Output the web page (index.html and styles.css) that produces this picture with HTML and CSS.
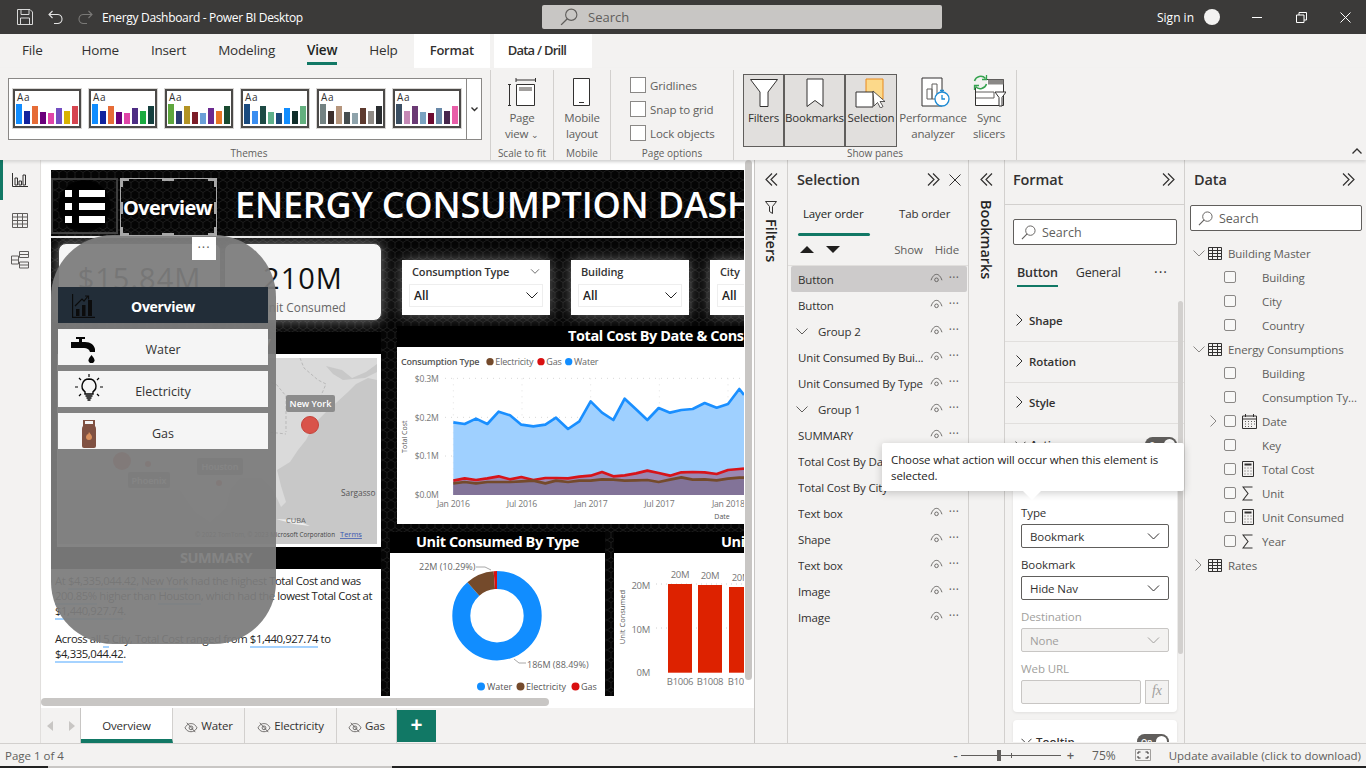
FILE: index.html
```html
<!DOCTYPE html>
<html lang="en">
<head>
<meta charset="utf-8">
<title>Energy Dashboard - Power BI Desktop</title>
<link rel="stylesheet" href="styles.css">
</head>
<body>
<svg class="defs" width="0" height="0" aria-hidden="true">
  <defs>
    <symbol id="eye" viewBox="0 0 14 11"><path d="M1 8C2.500 3.500 4.800 1.500 7 1.500S11.500 3.500 13 8" fill="none" stroke="currentColor"/><circle cx="7" cy="7.500" r="2" fill="none" stroke="currentColor"/></symbol>
    <symbol id="eyeoff" viewBox="0 0 16 14"><path d="M1 8C3 4 5.500 3 8 3s5 1 7 5c-2 3.500-4.500 4.500-7 4.500S3 11.500 1 8z" fill="none" stroke="currentColor"/><circle cx="8" cy="8" r="2.200" fill="none" stroke="currentColor"/><path d="M3 2l10 11" stroke="currentColor"/></symbol>
    <symbol id="dbl-r" viewBox="0 0 13 13"><path d="M1 .5l6 6-6 6M6 .5l6 6-6 6" fill="none" stroke="currentColor" stroke-width="1.200"/></symbol>
    <symbol id="dbl-l" viewBox="0 0 13 13"><path d="M12 .5l-6 6 6 6M7 .5l-6 6 6 6" fill="none" stroke="currentColor" stroke-width="1.200"/></symbol>
    <symbol id="chev-d" viewBox="0 0 12 7"><path d="M.5.5l5.500 5.500L11.500.5" fill="none" stroke="currentColor"/></symbol>
    <symbol id="chev-r" viewBox="0 0 7 12"><path d="M.5.5l5.500 5.500L.5 11.500" fill="none" stroke="currentColor"/></symbol>
    <symbol id="lens" viewBox="0 0 16 16"><circle cx="10" cy="6" r="5" fill="none" stroke="currentColor"/><path d="M6.500 9.500L1 15" stroke="currentColor" stroke-width="1.200"/></symbol>
    <symbol id="tbl" viewBox="0 0 14 13"><path d="M.5.500h13v12H.5zM.5 3.500h13M.5 6.500h13M.5 9.500h13M4.500.500v12M9.500.500v12" fill="none" stroke="#323130"/></symbol>
    <symbol id="calc" viewBox="0 0 12 16"><path d="M.5.500h11v15H.5z" fill="none" stroke="#323130"/><path d="M2.500 2.500h7v2h-7z" fill="#323130"/><path d="M2.500 7h1M5.500 7h1M8.500 7h1M2.500 10h1M5.500 10h1M8.500 10h1M2.500 13h1M5.500 13h1M8.500 13h1" stroke="#605e5c"/></symbol>
    <symbol id="sigma" viewBox="0 0 11 15"><path d="M10.500 1H1l5 6.500L1 14h9.500" fill="none" stroke="#323130" stroke-width="1.100"/></symbol>
    <symbol id="cal" viewBox="0 0 15 15"><path d="M.5 2h14v12.500H.5zM.5 5h14M3.500 0v3M11.500 0v3" fill="none" stroke="#323130"/><path d="M3 7.500h1M6 7.500h1M9 7.500h1M12 7.500h1M3 10h1M6 10h1M9 10h1M12 10h1M3 12.500h1M6 12.500h1M9 12.500h1" stroke="#605e5c"/></symbol>
  </defs>
</svg>

<div class="app">
  <header class="titlebar">
    <div class="qat">
      <svg class="qat-save" width="16" height="16" viewBox="0 0 16 16"><path d="M.5.500h12.500l2.500 2.500v12.500H.5z" fill="none" stroke="#d8d8d8"/><path d="M4 .500v5h8v-5M3.500 15.500V9h9v6.500" fill="none" stroke="#d8d8d8"/></svg>
      <svg class="qat-undo" width="15" height="15" viewBox="0 0 15 15"><path d="M4.500 1L1 4.500 4.500 8M1 4.500h8a4.500 4.500 0 0 1 1 9H6" fill="none" stroke="#e4e4e4" stroke-width="1.100"/></svg>
      <svg class="qat-redo" width="15" height="15" viewBox="0 0 15 15"><path d="M10.500 1L14 4.500 10.500 8M14 4.500H6a4.500 4.500 0 0 0-1 9h4" fill="none" stroke="#7a7977" stroke-width="1.100"/></svg>
    </div>
    <span class="doc-title">Energy Dashboard - Power BI Desktop</span>
    <div class="search-top"><svg width="18" height="18"><use href="#lens"/></svg><span>Search</span></div>
    <div class="account"><span>Sign in</span><i class="avatar"></i></div>
    <div class="winbtns">
      <svg width="11" height="11" viewBox="0 0 11 11"><path d="M0 5.500h10" stroke="#fff"/></svg>
      <svg width="11" height="11" viewBox="0 0 11 11"><path d="M.5 3h7.500v7.500H.5zM3 3V.5h7.500V8H8" fill="none" stroke="#fff"/></svg>
      <svg width="11" height="11" viewBox="0 0 11 11"><path d="M.5.500l10 10M10.500.500l-10 10" stroke="#fff"/></svg>
    </div>
  </header>

  <nav class="menutabs">
    <span class="mt mt-file">File</span>
    <span class="mt">Home</span>
    <span class="mt">Insert</span>
    <span class="mt">Modeling</span>
    <span class="mt mt-on">View</span>
    <span class="mt">Help</span>
    <span class="mt-ctx mt-format">Format</span>
    <span class="mt-ctx mt-drill">Data / Drill</span>
  </nav>

  <section class="ribbon">
    <div class="group g-themes">
      <div class="gallery">
        <div class="gallery-items">
          <div class="theme"><span class="aa">Aa</span><svg width="62" height="20" viewBox="0 0 62 20"><rect x="0" y="0" width="6" height="20" fill="#118dff"/><rect x="8" y="7" width="6" height="13" fill="#12239e"/><rect x="16" y="2" width="6" height="18" fill="#e66c37"/><rect x="24" y="8" width="6" height="12" fill="#6b007b"/><rect x="32" y="9" width="6" height="11" fill="#e044a7"/><rect x="40" y="4" width="6" height="16" fill="#744ec2"/><rect x="48" y="7" width="6" height="13" fill="#d9b300"/><rect x="56" y="2" width="6" height="18" fill="#d64550"/></svg></div>
          <div class="theme"><span class="aa">Aa</span><svg width="62" height="20" viewBox="0 0 62 20"><rect x="0" y="0" width="6" height="20" fill="#118dff"/><rect x="8" y="7" width="6" height="13" fill="#12239e"/><rect x="16" y="2" width="6" height="18" fill="#e66c37"/><rect x="24" y="8" width="6" height="12" fill="#6b007b"/><rect x="32" y="9" width="6" height="11" fill="#e044a7"/><rect x="40" y="4" width="6" height="16" fill="#4e2d84"/><rect x="48" y="7" width="6" height="13" fill="#1aab40"/><rect x="56" y="2" width="6" height="18" fill="#15403f"/></svg></div>
          <div class="theme"><span class="aa">Aa</span><svg width="62" height="20" viewBox="0 0 62 20"><rect x="0" y="0" width="6" height="20" fill="#5ea63c"/><rect x="8" y="7" width="6" height="13" fill="#2c3c72"/><rect x="16" y="2" width="6" height="18" fill="#b39324"/><rect x="24" y="8" width="6" height="12" fill="#7c1c28"/><rect x="32" y="9" width="6" height="11" fill="#6a9fd8"/><rect x="40" y="4" width="6" height="16" fill="#6b2a90"/><rect x="48" y="7" width="6" height="13" fill="#e87524"/><rect x="56" y="2" width="6" height="18" fill="#1a4a30"/></svg></div>
          <div class="theme"><span class="aa">Aa</span><svg width="62" height="20" viewBox="0 0 62 20"><rect x="0" y="0" width="6" height="20" fill="#1a4a7e"/><rect x="8" y="7" width="6" height="13" fill="#3b8ef0"/><rect x="16" y="2" width="6" height="18" fill="#1d4a44"/><rect x="24" y="8" width="6" height="12" fill="#5fb08a"/><rect x="32" y="9" width="6" height="11" fill="#1c4a7a"/><rect x="40" y="4" width="6" height="16" fill="#118dff"/><rect x="48" y="7" width="6" height="13" fill="#102e2a"/><rect x="56" y="2" width="6" height="18" fill="#63b07e"/></svg></div>
          <div class="theme"><span class="aa">Aa</span><svg width="62" height="20" viewBox="0 0 62 20"><rect x="0" y="0" width="6" height="20" fill="#738282"/><rect x="8" y="7" width="6" height="13" fill="#3c2f2c"/><rect x="16" y="2" width="6" height="18" fill="#b5957c"/><rect x="24" y="8" width="6" height="12" fill="#454d4f"/><rect x="32" y="9" width="6" height="11" fill="#8ea3ab"/><rect x="40" y="4" width="6" height="16" fill="#5d3a2e"/><rect x="48" y="7" width="6" height="13" fill="#8f8a85"/><rect x="56" y="2" width="6" height="18" fill="#2a2d30"/></svg></div>
          <div class="theme"><span class="aa">Aa</span><svg width="62" height="20" viewBox="0 0 62 20"><rect x="0" y="0" width="6" height="20" fill="#3a4f63"/><rect x="8" y="7" width="6" height="13" fill="#c488b5"/><rect x="16" y="2" width="6" height="18" fill="#6b3a74"/><rect x="24" y="8" width="6" height="12" fill="#7aa2c0"/><rect x="32" y="9" width="6" height="11" fill="#6d0a30"/><rect x="40" y="4" width="6" height="16" fill="#6888a8"/><rect x="48" y="7" width="6" height="13" fill="#48264c"/><rect x="56" y="2" width="6" height="18" fill="#e85ea8"/></svg></div>
        </div>
        <div class="gallery-more"><svg width="7" height="5" viewBox="0 0 7 5"><path d="M.5.500l3 3 3-3" fill="none" stroke="#323130" stroke-width="1.400"/></svg></div>
      </div>
      <span class="glabel">Themes</span>
    </div>

    <div class="group g-scale">
      <div class="bigbtn bb-tall">
        <svg width="28" height="28" viewBox="0 0 28 28"><path d="M8 2h19M8 0v4M27.500 0v4M1.500 6v22M0 6.500h3M0 27.500h3" stroke="#323130" fill="none"/><path d="M8.500 6.500h18v21h-18z" fill="#fff" stroke="#323130"/><path d="M11 9h13v4H11z" fill="#a19f9d"/></svg>
        <span class="bl">Page</span><span class="bl">view <small>⌄</small></span>
      </div>
      <span class="glabel">Scale to fit</span>
    </div>

    <div class="group g-mobile">
      <div class="bigbtn bb-tall">
        <svg width="18" height="28" viewBox="0 0 18 28"><path d="M.5.500h16v27H.5z" fill="#fff" stroke="#323130"/><path d="M6 24.500h5" stroke="#323130"/></svg>
        <span class="bl">Mobile</span><span class="bl">layout</span>
      </div>
      <span class="glabel">Mobile</span>
    </div>

    <div class="group g-page">
      <div class="checks">
        <label class="chk"><i></i>Gridlines</label>
        <label class="chk"><i></i>Snap to grid</label>
        <label class="chk"><i></i>Lock objects</label>
      </div>
      <span class="glabel">Page options</span>
    </div>

    <div class="group g-panes">
      <div class="panes">
        <div class="pane-btn pb-filters">
          <svg width="28" height="28" viewBox="0 0 28 28"><path d="M.5.500h27L18 13v14.500h-8V13z" fill="#fff" stroke="#323130"/></svg>
          <span class="bl">Filters</span>
        </div>
        <div class="pane-btn pb-bookmarks">
          <svg width="18" height="29" viewBox="0 0 18 29"><path d="M1 .5h16v27.500l-8-6-8 6z" fill="#fff" stroke="#323130"/></svg>
          <span class="bl">Bookmarks</span>
        </div>
        <div class="pane-btn pb-selection">
          <svg width="32" height="30" viewBox="0 0 32 30"><path d="M11 1h17v20H11z" fill="#fcd98a" stroke="#e8891c"/><path d="M1 14h17v15H1z" fill="#fff" stroke="#323130"/><path d="M18 13l1 15 3.500-3.500 3 5.500 2.500-1.500-3-5h5z" fill="#fff" stroke="#323130" stroke-width=".8"/></svg>
          <span class="bl">Selection</span>
        </div>
        <div class="bigbtn bb-perf">
          <svg width="30" height="30" viewBox="0 0 30 30"><path d="M1 1h20v28H1z" fill="#fff" stroke="#323130"/><path d="M6 12h5v10H6zM11 7h5v15h-5z" fill="none" stroke="#605e5c"/><circle cx="21" cy="22" r="7" fill="#fff" stroke="#1b8ad4" stroke-width="1.300"/><path d="M21 18v4h3M19 13.500h4" fill="none" stroke="#1b8ad4" stroke-width="1.300"/></svg>
          <span class="bl">Performance</span><span class="bl">analyzer</span>
        </div>
        <div class="bigbtn bb-sync">
          <svg width="34" height="33" viewBox="0 0 34 33"><path d="M3.500 5.500h28v26h-28z" fill="#fff" stroke="#323130"/><path d="M16 5.500h15.500v5H16z" fill="#8a8886"/><path d="M4 18h18v6H4" fill="none" stroke="#605e5c"/><path d="M23 18h11l-4 5.500V32h-3v-8.500z" fill="#fff" stroke="#323130"/><circle cx="8.500" cy="8.500" r="7" fill="#f3f2f1"/><path d="M2.500 7A6.500 6.500 0 0 1 13.500 4.500M14.500 10A6.500 6.500 0 0 1 3.500 12.500" fill="none" stroke="#35a34f" stroke-width="1.500"/><path d="M14.500 1v4.500H10M2.500 16v-4.500H7" fill="none" stroke="#35a34f" stroke-width="1.300"/></svg>
          <span class="bl">Sync</span><span class="bl">slicers</span>
        </div>
      </div>
      <span class="glabel">Show panes</span>
    </div>
    <svg class="collapse" width="10" height="6" viewBox="0 0 10 6"><path d="M.5 5.500L5 1l4.500 4.500" fill="none" stroke="#323130" stroke-width="1.300"/></svg>
  </section>

  <main class="workspace">
    <aside class="rail">
      <div class="rail-item rail-on"><svg width="16" height="14" viewBox="0 0 16 14"><path d="M.5 0v13.500H16" fill="none" stroke="#323130"/><path d="M3 5h2.500v7H3zM7 8h2.500v4H7zM11 2h2.500v10H11z" fill="none" stroke="#323130"/></svg></div>
      <div class="rail-item"><svg width="16" height="15" viewBox="0 0 16 15"><path d="M.5.500h15v14H.5zM.5 4h15M.5 7.500h15M.5 11h15M5.500.500v14M10.500.500v14" fill="none" stroke="#605e5c"/></svg></div>
      <div class="rail-item"><svg width="18" height="18" viewBox="0 0 18 18"><path d="M8.500.500h9v6h-9zM8.500 11h9v6h-9zM.5 5h7v8h-7zM.5 9h7M8.500 3.500h9M8.500 14h9" fill="none" stroke="#605e5c"/></svg></div>
    </aside>

    <section class="report">
      <div class="report-view">
        <div class="canvas">
          <svg class="texture" width="693" height="526" aria-hidden="true">
            <defs><pattern id="hex" width="8" height="10" patternUnits="userSpaceOnUse"><rect width="8" height="10" fill="#050505"/><path d="M0 2.500l4-2.500 4 2.500v5l-4 2.500-4-2.500z" fill="none" stroke="#242424" stroke-width=".7"/></pattern></defs>
            <rect width="693" height="526" fill="url(#hex)"/>
          </svg>

          <div class="v menu-btn"><svg width="40" height="35" viewBox="0 0 40 35"><path d="M0 1h7v7H0zM14 1h26v7H14zM0 14h7v7H0zM14 14h26v7H14zM0 27h7v7H0zM14 27h26v7H14z" fill="#fff"/></svg></div>
          <div class="v sel-label">Overview</div>
          <div class="v page-title">ENERGY CONSUMPTION DASH</div>
          <div class="v rule"></div>

          <div class="v card card-a"><b>$15.84M</b><span>Total Cost</span></div>
          <div class="v card card-b"><b>210M</b><span>Unit Consumed</span></div>

          <div class="v slicer sl-a"><div class="sl-head"><span>Consumption Type</span><svg width="10" height="5"><use href="#chev-d"/></svg></div><div class="sl-box"><span>All</span><svg width="12" height="7"><use href="#chev-d"/></svg></div></div>
          <div class="v slicer sl-b"><div class="sl-head"><span>Building</span></div><div class="sl-box"><span>All</span><svg width="12" height="7"><use href="#chev-d"/></svg></div></div>
          <div class="v slicer sl-c"><div class="sl-head"><span>City</span></div><div class="sl-box"><span>All</span></div></div>

          <div class="v band band-map">Total Cost By City</div>
          <div class="v map-frame">
            <svg width="319" height="186" viewBox="58 358 319 186">
              <rect x="58" y="358" width="319" height="186" fill="#c8c8c8"/>
              <path d="M58 358H377V380L368 378 356 384 348 392 326 412 314 424 306 440 298 450 290 462 277 470 281 486 286 502 281 507 272 488 262 478 240 478 230 490 226 508 210 522 195 512 180 490 58 490z" fill="#dadada"/>
              <path d="M326 366l16 4 10 8 14-6 11-8v8l-12 6-22 2-10-6z" fill="#c8c8c8"/>
              <path d="M300 358l4 10 14 12 8 4-6 14M286 396v36M250 430l36 4M262 380l14 4 10 12" fill="none" stroke="#b9b9b9" stroke-dasharray="3 2"/>
              <path d="M276 519l20 1 14 6-16-2z" fill="#ededed"/>
              <circle cx="122" cy="461" r="9" fill="#c9574c"/><circle cx="148" cy="464" r="3" fill="#c9574c"/><circle cx="219" cy="483" r="3" fill="#c9574c"/>
              <circle cx="310" cy="425" r="8.500" fill="#d9534a" stroke="#c4433a"/>
              <rect x="128" y="472" width="42" height="16" rx="2" fill="#8a8a8a"/><rect x="197" y="458" width="46" height="17" rx="2" fill="#8a8a8a"/>
              <rect x="286" y="395" width="49" height="17" rx="2" fill="#8c8c8c"/>
              <text x="310.500" y="407" class="m-city">New York</text>
              <text x="149" y="484" class="m-city">Phoenix</text>
              <text x="220" y="470" class="m-city">Houston</text>
              <text x="341" y="496" class="m-sea">Sargasso S</text>
              <text x="286" y="523" class="m-tiny">CUBA</text>
              <text x="195" y="537" class="m-copy" textLength="140" lengthAdjust="spacingAndGlyphs">© 2022 TomTom, © 2023 Microsoft Corporation</text>
              <text x="340" y="537" class="m-terms">Terms</text>
            </svg>
          </div>

          <div class="v band band-sum">SUMMARY</div>
          <div class="v summary">
            <p>At <u>$4,335,044.42</u>, <u>New York</u> had the highest Total Cost and was<br><u>200.85%</u> higher than <u>Houston</u>, which had the lowest Total Cost at<br><u>$1,440,927.74</u>.</p>
            <p>Across all <u>5</u> City, Total Cost ranged from <u>$1,440,927.74</u> to<br><u>$4,335,044.42</u>.</p>
          </div>

          <div class="v band band-line">Total Cost By Date &amp; Consumption Type</div>
          <div class="v linechart">
            <svg width="347" height="177" viewBox="21 321 1041 531">
              <rect x="21" y="321" width="1041" height="531" fill="#fff"/>
              <text x="33" y="374" class="lc-lt lc-bold">Consumption Type</text>
              <circle cx="300" cy="365" r="11" fill="#744a2b"/><text x="316" y="374" class="lc-lt">Electricity</text>
              <circle cx="453" cy="365" r="11" fill="#d90f10"/><text x="469" y="374" class="lc-lt">Gas</text>
              <circle cx="536" cy="365" r="11" fill="#118dff"/><text x="552" y="374" class="lc-lt">Water</text>
              <path d="M165 415H1062M165 532H1062M165 648H1062" stroke="#d8d8d8" stroke-width="3" stroke-dasharray="3 15"/>
              <path d="M190 415V765M396 415V765M602 415V765M808 415V765M1014 415V765" stroke="#e0e0e0" stroke-width="3" stroke-dasharray="3 15"/>
              <polygon fill="#9fd0ff" points="190,547 224,552 258,536 292,552 326,515 360,526 394,554 430,559 466,554 498,533 534,567 568,544 602,484 636,518 670,540 704,476 738,508 772,540 806,504 840,518 874,510 908,507 944,489 980,503 1014,492 1048,447 1062,465 1062,765 190,765"/>
              <polygon fill="#9b87b2" points="190,722 224,715 258,720 292,715 326,709 360,718 394,711 430,720 466,714 498,714 534,715 568,710 602,707 636,696 670,709 704,706 738,700 772,692 806,699 840,707 874,697 908,696 944,697 980,702 1014,690 1048,687 1062,686 1062,765 190,765"/>
              <polygon fill="#827398" points="190,730 224,726 258,730 292,726 326,726 360,726 394,724 430,722 466,730 498,722 534,726 568,722 602,722 636,718 670,719 704,722 738,721 772,720 806,726 840,719 874,712 908,719 944,718 980,721 1014,716 1048,713 1062,713 1062,765 190,765"/>
              <polyline fill="none" stroke="#1a8fff" stroke-width="8" stroke-linejoin="round" points="190,547 224,552 258,536 292,552 326,515 360,526 394,554 430,559 466,554 498,533 534,567 568,544 602,484 636,518 670,540 704,476 738,508 772,540 806,504 840,518 874,510 908,507 944,489 980,503 1014,492 1048,447 1062,465"/>
              <polyline fill="none" stroke="#d7141a" stroke-width="8" stroke-linejoin="round" points="190,722 224,715 258,720 292,715 326,709 360,718 394,711 430,720 466,714 498,714 534,715 568,710 602,707 636,696 670,709 704,706 738,700 772,692 806,699 840,707 874,697 908,696 944,697 980,702 1014,690 1048,687 1062,686"/>
              <polyline fill="none" stroke="#744a2b" stroke-width="8" stroke-linejoin="round" points="190,730 224,726 258,730 292,726 326,726 360,726 394,724 430,722 466,730 498,722 534,726 568,722 602,722 636,718 670,719 704,722 738,721 772,720 806,726 840,719 874,712 908,719 944,718 980,721 1014,716 1048,713 1062,713"/>
              <text x="146" y="425" class="lc-ax lc-end">$0.3M</text><text x="146" y="542" class="lc-ax lc-end">$0.2M</text><text x="146" y="658" class="lc-ax lc-end">$0.1M</text><text x="146" y="774" class="lc-ax lc-end">$0.0M</text>
              <text x="190" y="800" class="lc-ax lc-mid">Jan 2016</text><text x="396" y="800" class="lc-ax lc-mid">Jul 2016</text><text x="603" y="800" class="lc-ax lc-mid">Jan 2017</text><text x="808" y="800" class="lc-ax lc-mid">Jul 2017</text><text x="1015" y="800" class="lc-ax lc-mid">Jan 2018</text>
              <text x="996" y="838" class="lc-sm lc-mid">Date</text>
              <text transform="translate(52 590) rotate(-90)" class="lc-sm lc-mid">Total Cost</text>
            </svg>
          </div>

          <div class="v band band-donut">Unit Consumed By Type</div>
          <div class="v donut">
            <svg width="215" height="143" viewBox="390 553 215 143">
              <rect x="390" y="553" width="215" height="143" fill="#fff"/>
              <g transform="rotate(-90 497 615.700)" fill="none" stroke-width="18">
                <circle cx="497" cy="615.700" r="35.700" stroke="#118dff" pathLength="100" stroke-dasharray="88.490 11.510"/>
                <circle cx="497" cy="615.700" r="35.700" stroke="#744a2b" pathLength="100" stroke-dasharray="10.290 89.710" stroke-dashoffset="-88.490"/>
                <circle cx="497" cy="615.700" r="35.700" stroke="#d90f10" pathLength="100" stroke-dasharray="1.220 98.780" stroke-dashoffset="-98.780"/>
              </g>
              <path d="M476 567h9l6 3M514 659l5 4h7" fill="none" stroke="#a8a8a8"/>
              <text x="419" y="570" class="d-lbl">22M (10.29%)</text>
              <text x="527" y="668" class="d-lbl">186M (88.49%)</text>
              <circle cx="481" cy="686.500" r="4" fill="#118dff"/><text x="487" y="690" class="d-lbl d-dk">Water</text>
              <circle cx="520.500" cy="686.500" r="4" fill="#744a2b"/><text x="526" y="690" class="d-lbl d-dk">Electricity</text>
              <circle cx="575.500" cy="686.500" r="4" fill="#d90f10"/><text x="581" y="690" class="d-lbl d-dk">Gas</text>
            </svg>
          </div>

          <div class="v band band-bars">Unit Consumed By Building</div>
          <div class="v bars">
            <svg width="130" height="143" viewBox="614 553 130 143">
              <rect x="614" y="553" width="130" height="143" fill="#fff"/>
              <path d="M656 584h88M656 628h88" stroke="#d0d0d0" stroke-dasharray="1 4"/>
              <rect x="668" y="584" width="24" height="88.700" fill="#dd2200"/><rect x="698" y="585" width="24" height="87.700" fill="#dd2200"/><rect x="729" y="587" width="24" height="85.700" fill="#dd2200"/>
              <text x="680" y="578" class="b-t">20M</text><text x="710" y="579" class="b-t">20M</text><text x="741" y="581" class="b-t">20M</text>
              <text x="650" y="589" class="b-t b-e">20M</text><text x="650" y="633" class="b-t b-e">10M</text><text x="650" y="676" class="b-t b-e">0M</text>
              <text x="680" y="685" class="b-t">B1006</text><text x="710" y="685" class="b-t">B1008</text><text x="741" y="685" class="b-t">B1010</text>
              <text transform="translate(625 617) rotate(-90)" class="b-y">Unit Consumed</text>
            </svg>
          </div>

          <div class="nav-panel">
            <div class="nav-item nav-on">
              <svg class="ni-a" width="23" height="24" viewBox="0 0 23 24"><path d="M.5 0v23.500H23" fill="none" stroke="#0c0c0c" stroke-width="1.300"/><path d="M4 15h3.500v7H4zM10 11h3.500v11H10zM16 6h4v16h-4z" fill="#0c0c0c"/><path d="M3 12l7-7 2 2 4-5M13 2h3.500v3.500" fill="none" stroke="#0c0c0c" stroke-width="1.200"/></svg>
              <span>Overview</span>
            </div>
            <div class="nav-item">
              <svg class="ni-w" width="24" height="29" viewBox="0 0 24 29"><path d="M0 8h8V5H5V3h9v2h-3v3h3c6 0 9 3 10 7v3h-5c-1-3-3-4-6-4H0z" fill="#050505"/><path d="M20.500 21c-2 2.500-3 4-3 5.200a3 3 0 0 0 6 0c0-1.200-1-2.700-3-5.200z" fill="#050505"/></svg>
              <span>Water</span>
            </div>
            <div class="nav-item">
              <svg class="ni-e" width="28" height="28" viewBox="0 0 28 28"><path d="M14 5a7 7 0 0 0-4 12.700V20h8v-2.300A7 7 0 0 0 14 5zM10.500 22h7M11.500 24h5M12.500 26h3" fill="none" stroke="#050505" stroke-width="1.400"/><path d="M14 0v3M4 4l2 2M24 4l-2 2M0 13h3M25 13h3M4 22l2-2M24 22l-2-2" stroke="#050505" stroke-width="1.200"/></svg>
              <span>Electricity</span>
            </div>
            <div class="nav-item">
              <svg class="ni-g" width="16" height="29" viewBox="0 0 16 29"><path d="M3 0h10v5H3z" fill="none" stroke="#805142" stroke-width="2"/><path d="M1 9q0-4 4-4h6q4 0 4 4v17q0 2-2 2H3q-2 0-2-2z" fill="#805142"/><path d="M8 12c1 2 3 3 3 5a3 3 0 0 1-6 0c0-1 1-2 1-3 1 1 1 1 2-2z" fill="#d98f5c"/></svg>
              <span>Gas</span>
            </div>
          </div>

          <div class="handles"><i class="h h-tl"></i><i class="h h-tc"></i><i class="h h-tr"></i><i class="h h-ml"></i><i class="h h-mr"></i><i class="h h-bl"></i><i class="h h-bc"></i><i class="h h-br"></i></div>
          <div class="more-box">···</div>
        </div>
        <div class="vscroll"></div>
        <div class="hscroll"></div>
      </div>

      <div class="pagetabs">
        <div class="pt-nav"><svg width="6" height="10" viewBox="0 0 6 10"><path d="M6 0L0 5l6 5z" fill="#c8c6c4"/></svg><svg width="6" height="10" viewBox="0 0 6 10"><path d="M0 0l6 5-6 5z" fill="#c8c6c4"/></svg></div>
        <div class="pt pt-on">Overview</div>
        <div class="pt pt-w"><svg width="14" height="12"><use href="#eyeoff"/></svg>Water</div>
        <div class="pt pt-e"><svg width="14" height="12"><use href="#eyeoff"/></svg>Electricity</div>
        <div class="pt pt-g"><svg width="14" height="12"><use href="#eyeoff"/></svg>Gas</div>
        <div class="pt-add">+</div>
      </div>
    </section>

    <aside class="strip strip-filters">
      <svg class="ic13" width="13" height="13"><use href="#dbl-l"/></svg>
      <svg class="strip-fn" width="12" height="13" viewBox="0 0 12 13"><path d="M.5.500h11L7.500 5.500v7l-3-2v-5z" fill="none" stroke="#323130"/></svg>
      <span class="vtext">Filters</span>
    </aside>

    <aside class="pane p-selection">
      <div class="pane-head"><h2>Selection</h2><svg class="ic13" width="13" height="13"><use href="#dbl-r"/></svg><svg class="ic-x" width="12" height="12" viewBox="0 0 12 12"><path d="M.5.500l11 11M11.500.500l-11 11" stroke="#323130"/></svg></div>
      <div class="sel-tabs"><span class="st st-on">Layer order</span><span class="st">Tab order</span></div>
      <div class="sel-tools">
        <svg width="14" height="7" viewBox="0 0 14 7"><path d="M7 0l7 7H0z" fill="#201f1e"/></svg>
        <svg width="14" height="7" viewBox="0 0 14 7"><path d="M0 0h14L7 7z" fill="#201f1e"/></svg>
        <span class="st-show">Show</span><span class="st-hide">Hide</span>
      </div>
      <ul class="layers">
        <li class="on"><span class="ln">Button</span><svg width="13" height="10"><use href="#eye"/></svg><em>···</em></li>
        <li><span class="ln">Button</span><svg width="13" height="10"><use href="#eye"/></svg><em>···</em></li>
        <li class="grp"><svg class="gc" width="12" height="7"><use href="#chev-d"/></svg><span class="ln">Group 2</span><svg width="13" height="10"><use href="#eye"/></svg><em>···</em></li>
        <li><span class="ln">Unit Consumed By Bui...</span><svg width="13" height="10"><use href="#eye"/></svg><em>···</em></li>
        <li><span class="ln">Unit Consumed By Type</span><svg width="13" height="10"><use href="#eye"/></svg><em>···</em></li>
        <li class="grp"><svg class="gc" width="12" height="7"><use href="#chev-d"/></svg><span class="ln">Group 1</span><svg width="13" height="10"><use href="#eye"/></svg><em>···</em></li>
        <li><span class="ln">SUMMARY</span><svg width="13" height="10"><use href="#eye"/></svg><em>···</em></li>
        <li><span class="ln">Total Cost By Date...</span><svg width="13" height="10"><use href="#eye"/></svg><em>···</em></li>
        <li><span class="ln">Total Cost By City</span><svg width="13" height="10"><use href="#eye"/></svg><em>···</em></li>
        <li><span class="ln">Text box</span><svg width="13" height="10"><use href="#eye"/></svg><em>···</em></li>
        <li><span class="ln">Shape</span><svg width="13" height="10"><use href="#eye"/></svg><em>···</em></li>
        <li><span class="ln">Text box</span><svg width="13" height="10"><use href="#eye"/></svg><em>···</em></li>
        <li><span class="ln">Image</span><svg width="13" height="10"><use href="#eye"/></svg><em>···</em></li>
        <li><span class="ln">Image</span><svg width="13" height="10"><use href="#eye"/></svg><em>···</em></li>
      </ul>
    </aside>

    <aside class="strip strip-bookmarks">
      <svg class="ic13" width="13" height="13"><use href="#dbl-l"/></svg>
      <span class="vtext vtext-b">Bookmarks</span>
    </aside>

    <aside class="pane p-format">
      <div class="pane-head pane-head-f"><h2>Format</h2><svg class="ic13" width="13" height="13"><use href="#dbl-r"/></svg></div>
      <div class="f-body">
        <div class="searchbox sb-f"><svg width="15" height="15"><use href="#lens"/></svg><span>Search</span></div>
        <div class="f-tabs"><span class="ft ft-on">Button</span><span class="ft">General</span><em>···</em></div>
        <div class="f-sec"><svg width="7" height="12"><use href="#chev-r"/></svg>Shape</div>
        <div class="f-sec"><svg width="7" height="12"><use href="#chev-r"/></svg>Rotation</div>
        <div class="f-sec"><svg width="7" height="12"><use href="#chev-r"/></svg>Style</div>
        <div class="f-cardhead f-acthead"><svg width="11" height="7"><use href="#chev-d"/></svg><span>Action</span><i class="toggle">On</i></div>
        <div class="f-card f-action">
          <label class="f-lab">Type</label>
          <div class="f-sel">Bookmark<svg width="13" height="7"><use href="#chev-d"/></svg></div>
          <label class="f-lab">Bookmark</label>
          <div class="f-sel">Hide Nav<svg width="13" height="7"><use href="#chev-d"/></svg></div>
          <label class="f-lab f-dis">Destination</label>
          <div class="f-sel f-sel-dis">None<svg width="13" height="7"><use href="#chev-d"/></svg></div>
          <label class="f-lab f-dis">Web URL</label>
          <div class="f-url"><i></i><b>fx</b></div>
        </div>
        <div class="f-card f-tooltip">
          <div class="f-cardhead"><svg width="11" height="7"><use href="#chev-d"/></svg><span>Tooltip</span><i class="toggle">On</i></div>
        </div>
        <div class="f-scroll"></div>
      </div>
    </aside>

    <aside class="pane p-data">
      <div class="pane-head"><h2>Data</h2><svg class="ic13" width="13" height="13"><use href="#dbl-r"/></svg></div>
      <div class="searchbox sb-d"><svg width="15" height="15"><use href="#lens"/></svg><span>Search</span></div>
      <ul class="tree">
        <li class="t-tbl"><svg class="tc" width="12" height="7"><use href="#chev-d"/></svg><svg class="ti" width="14" height="13"><use href="#tbl"/></svg>Building Master</li>
        <li class="t-f"><i class="cb"></i><span class="tl">Building</span></li>
        <li class="t-f"><i class="cb"></i><span class="tl">City</span></li>
        <li class="t-f"><i class="cb"></i><span class="tl">Country</span></li>
        <li class="t-tbl"><svg class="tc" width="12" height="7"><use href="#chev-d"/></svg><svg class="ti" width="14" height="13"><use href="#tbl"/></svg>Energy Consumptions</li>
        <li class="t-f"><i class="cb"></i><span class="tl">Building</span></li>
        <li class="t-f"><i class="cb"></i><span class="tl">Consumption Ty...</span></li>
        <li class="t-f t-date"><svg class="tx" width="7" height="12"><use href="#chev-r"/></svg><i class="cb"></i><svg class="fi" width="15" height="15"><use href="#cal"/></svg><span class="tl">Date</span></li>
        <li class="t-f"><i class="cb"></i><span class="tl">Key</span></li>
        <li class="t-f"><i class="cb"></i><svg class="fi" width="12" height="16"><use href="#calc"/></svg><span class="tl">Total Cost</span></li>
        <li class="t-f"><i class="cb"></i><svg class="fi" width="11" height="15"><use href="#sigma"/></svg><span class="tl">Unit</span></li>
        <li class="t-f"><i class="cb"></i><svg class="fi" width="12" height="16"><use href="#calc"/></svg><span class="tl">Unit Consumed</span></li>
        <li class="t-f"><i class="cb"></i><svg class="fi" width="11" height="15"><use href="#sigma"/></svg><span class="tl">Year</span></li>
        <li class="t-tbl"><svg class="tc tc-r" width="7" height="12"><use href="#chev-r"/></svg><svg class="ti" width="14" height="13"><use href="#tbl"/></svg>Rates</li>
      </ul>
    </aside>

    <div class="tip">Choose what action will occur when this element is<br>selected.</div>
  </main>

  <footer class="status">
    <span class="st-page">Page 1 of 4</span>
    <div class="zoom">
      <span class="z-btn">-</span>
      <span class="z-track"><i class="z-thumb"></i><i class="z-tick"></i></span>
      <span class="z-btn">+</span>
      <span class="z-val">75%</span>
      <svg width="16" height="12" viewBox="0 0 16 12"><path d="M.5.500h15v11H.5z" fill="none" stroke="#a19f9d"/><path d="M3 5V3h2.500M13 5V3h-2.500M3 7v2h2.500M13 7v2h-2.500" fill="none" stroke="#323130"/></svg>
      <span class="z-upd">Update available (click to download)</span>
    </div>
  </footer>
  <div class="taskbar"><i class="tb-gap"></i></div>
</div>
</body>
</html>
```

FILE: styles.css
```css
* { box-sizing: border-box; }
html, body { margin: 0; height: 100%; overflow: hidden; }
body { font-family: "Open Sans", "Noto Sans", sans-serif; font-size: 12px; color: #323130; background: #f3f2f1; }
.defs { position: absolute; }
ul { list-style: none; margin: 0; padding: 0; }
p { margin: 0; }
svg { display: block; flex: none; }

.app { width: 1366px; height: 768px; display: flex; flex-direction: column; }

/* title bar */
.titlebar { height: 34px; flex: none; background: #3b3a39; color: #fff; display: flex; align-items: center; position: relative; }
.qat { display: flex; align-items: center; padding-left: 17px; width: 102px; gap: 15px; }
.doc-title { font-size: 12px; width: 440px; letter-spacing: -.33px; }
.search-top { width: 400px; height: 24px; background: #c8c6c4; border-radius: 2px; display: flex; align-items: center; padding-left: 18px; gap: 10px; color: #605e5c; font-size: 13px; }
.account { margin-left: 215px; display: flex; align-items: center; gap: 10px; font-size: 12px; }
.avatar { width: 16px; height: 16px; border-radius: 50%; background: #f3f2f1; }
.winbtns { margin-left: 32px; display: flex; gap: 33px; }

/* menu tabs */
.menutabs { height: 34px; flex: none; display: flex; align-items: stretch; padding-left: 22px; background: #f3f2f1; font-size: 13.5px; color: #323130; }
.mt { margin-right: 32px; display: flex; align-items: center; position: relative; letter-spacing: -.2px; padding-bottom: 2px; }
.mt-file { margin-right: 39px; }
.mt-on { font-weight: 600; color: #201f1e; }
.mt-on::after { content: ""; position: absolute; left: 0; right: 0; bottom: 3px; height: 3px; background: #117865; }
.mt-ctx { background: #fff; display: flex; align-items: center; font-weight: 600; color: #323130; letter-spacing: -.2px; font-size: 13px; padding-bottom: 2px; }
.mt-format { width: 76px; margin-left: -16px; margin-right: 4px; padding-left: 16px; }
.mt-drill { width: 98px; letter-spacing: -.75px; padding-left: 14px; }

/* ribbon */
.ribbon { height: 92px; flex: none; display: flex; background: #f3f2f1; position: relative; box-shadow: 0 2px 3px rgba(0,0,0,.12); z-index: 3; font-size: 11.5px; color: #605e5c; }
.group { display: flex; flex-direction: column; border-right: 1px solid #d2d0ce; margin-top: 2px; height: 90px; }
.glabel { height: 14px; margin-top: auto; flex: none; text-align: center; font-size: 10px; line-height: 14px; color: #605e5c; }
.g-themes { width: 491px; padding: 8px 0 0 8px; }
.gallery { width: 474px; height: 62px; flex: none; display: flex; background: #fff; border: 1px solid #8a8886; }
.gallery-items { width: 457px; display: flex; gap: 8px; padding: 10px 0 0 4px; }
.theme { width: 68px; height: 39px; border: 2px solid #4c4a48; outline: 1px solid #d8d6d4; padding: 0 0 0 2px; position: relative; }
.theme .aa { display: block; font-size: 10px; line-height: 13px; color: #323130; letter-spacing: .6px; }
.theme svg { position: absolute; left: 1px; top: 13px; }
.gallery-more { flex: 1; border-left: 1px solid #8a8886; display: flex; align-items: center; justify-content: center; }
.g-scale { width: 63px; }
.g-mobile { width: 57px; }
.g-page { width: 123px; }
.g-panes { width: 283px; }
.bigbtn { flex: 1; min-height: 0; display: flex; flex-direction: column; align-items: center; padding-top: 6px; }
.bigbtn svg { margin-bottom: 4px; }
.bb-tall { padding-top: 8px; }
.bb-tall svg { margin-bottom: 4px; }
.bl { display: block; line-height: 16px; font-size: 11.5px; letter-spacing: -.2px; white-space: nowrap; color: #605e5c; }
.bl small { font-size: 9px; }
.checks { flex: 1; min-height: 0; display: flex; flex-direction: column; gap: 8px; padding: 7px 0 0 19px; }
.chk { display: flex; align-items: center; gap: 4px; font-size: 11.5px; height: 16px; letter-spacing: -.1px; color: #605e5c; }
.chk i { width: 16px; height: 16px; background: #fff; border: 1px solid #8a8886; }
.panes { flex: 1; min-height: 0; display: flex; padding: 4px 0 0 9px; align-items: flex-start; }
.pane-btn { height: 73px; background: #e1dfdd; border: 1px solid #605e5c; margin-right: -1px; display: flex; flex-direction: column; align-items: center; padding-top: 3px; color: #323130; position: relative; }
.pane-btn svg { height: 30px; margin-bottom: 2px; }
.pane-btn .bl { color: #323130; }
.pb-filters { width: 41px; }
.pb-bookmarks { width: 63px; border-width: 1px 2px; }
.pb-selection { width: 52px; }
.bb-perf { flex: none; width: 74px; padding-top: 3px; }
.bb-perf svg { margin-bottom: 3px; margin-left: 6px; }
.bb-sync { flex: none; width: 38px; padding-top: 0; }
.bb-sync svg { margin-bottom: 3px; }
.collapse { position: absolute; right: 4px; bottom: 6px; }

/* workspace */
.workspace { flex: 1; min-height: 0; display: flex; position: relative; background: #f3f2f1; }
.rail { width: 41px; flex: none; border-right: 1px solid #e1dfdd; display: flex; flex-direction: column; }
.rail-item { height: 40px; display: flex; align-items: center; justify-content: center; padding-right: 1px; }
.rail-on { box-shadow: inset 3px 0 0 #117865; }

.report { width: 714px; flex: none; display: flex; flex-direction: column; border-right: 1px solid #c8c6c4; }
.report-view { flex: 1; min-height: 0; background: #fff; position: relative; overflow: hidden; box-shadow: inset 0 4px 4px -3px rgba(0,0,0,.1); }
.canvas { position: absolute; left: 10px; top: 10px; width: 693px; height: 526px; background: #050505; overflow: hidden; }
.texture { position: absolute; inset: 0; }
.v { position: absolute; }

.menu-btn { left: 0; top: 8px; width: 67px; height: 56px; border: 2px solid #3e3e3e; background: radial-gradient(circle at 50% 50%, #000 62%, transparent 66%); display: flex; align-items: center; justify-content: center; padding-top: 1px; }
.sel-label { left: 69px; top: 8px; width: 97px; height: 58px; padding-right: 2px; color: #fff; font-weight: 700; font-size: 20px; display: flex; align-items: center; justify-content: center; letter-spacing: -.7px; }
.page-title { left: 184px; top: 11px; height: 48px; line-height: 48px; white-space: nowrap; color: #fff; font-size: 36px; font-weight: 600; letter-spacing: -.2px; }
.rule { left: 0; top: 66px; width: 693px; height: 2px; background: #e8e8e8; }

.card { background: #f6f6f6; border: 1px solid #444; border-radius: 8px; box-shadow: 0 0 14px rgba(255,255,255,.45); display: flex; flex-direction: column; align-items: center; }
.card b { font-weight: 400; font-size: 29px; line-height: 40px; margin-top: 14px; color: #111; letter-spacing: 1px; }
.card span { font-size: 11.8px; line-height: 16px; color: #666; margin-top: 1px; }
.card-a { left: 7px; top: 73px; width: 163px; height: 78px; }
.card-b { left: 173px; top: 73px; width: 158px; height: 78px; }

.slicer { height: 55px; background: #fff; box-shadow: 0 0 14px rgba(255,255,255,.4); padding: 4px 7px 0; }
.sl-head { display: flex; justify-content: space-between; align-items: center; font-weight: 600; font-size: 11px; line-height: 15px; color: #333; padding: 0 3px; letter-spacing: -.15px; }
.sl-box { margin-top: 5px; height: 23px; border: 1px solid #eee; display: flex; align-items: center; justify-content: space-between; padding: 0 4px; font-weight: 600; font-size: 12px; color: #222; }
.sl-a { left: 351px; top: 90px; width: 148px; }
.sl-b { left: 520px; top: 90px; width: 118px; }
.sl-c { left: 659px; top: 90px; width: 118px; }

.band { background: #000; color: #fff; text-align: center; font-weight: 700; font-size: 14.5px; line-height: 19px; height: 21px; white-space: nowrap; overflow: hidden; letter-spacing: -.4px; }
.band-map { left: 6px; top: 162px; width: 324px; height: 22px; padding-right: 16px; }
.map-frame { left: 6px; top: 184px; width: 324px; height: 193px; background: #fff; padding: 4px 0 0 1px; overflow: hidden; }
.m-city { font: 600 9px "Open Sans", sans-serif; fill: #fff; text-anchor: middle; }
.m-sea { font: 8.300px "Open Sans", sans-serif; fill: #555; }
.m-tiny { font: 7.500px "Open Sans", sans-serif; fill: #666; }
.m-copy { font: 7.500px "Open Sans", sans-serif; fill: #444; }
.m-terms { font: 7.500px "Open Sans", sans-serif; fill: #3a57b0; text-decoration: underline; }
.band-sum { left: 0; top: 377px; width: 330px; height: 22px; line-height: 22px; }
.summary { left: 0; top: 399px; width: 330px; height: 127px; background: #fff; padding: 4px 0 0 4px; font-size: 11.3px; line-height: 15px; color: #252423; letter-spacing: -.4px; white-space: nowrap; }
.summary p { margin-bottom: 13px; }
.summary u { text-decoration: none; border-bottom: 2px solid #a6d3ff; }
.band-line { left: 346px; top: 156px; width: 347px; text-align: left; padding-left: 171px; }
.linechart { left: 346px; top: 177px; width: 347px; height: 177px; }
.lc-lt { font: 27px "Open Sans", sans-serif; fill: #666; letter-spacing: -.6px; }
.lc-bold { font-weight: 600; fill: #555; }
.lc-ax { font: 26px "Open Sans", sans-serif; fill: #777; letter-spacing: -.6px; }
.lc-end { text-anchor: end; }
.lc-mid { text-anchor: middle; }
.lc-sm { font: 21px "Open Sans", sans-serif; fill: #555; }
.band-donut { left: 339px; top: 362px; width: 215px; }
.donut { left: 339px; top: 383px; width: 215px; height: 143px; }
.d-lbl { font: 9px "Open Sans", sans-serif; fill: #666; }
.d-dk { fill: #555; }
.band-bars { left: 563px; top: 362px; width: 130px; text-align: left; padding-left: 107px; }
.bars { left: 563px; top: 383px; width: 130px; height: 143px; }
.b-t { font: 9.500px "Open Sans", sans-serif; fill: #777; text-anchor: middle; letter-spacing: -.3px; }
.b-e { text-anchor: end; }
.b-y { font: 7.500px "Open Sans", sans-serif; fill: #555; text-anchor: middle; }

/* bookmark-driven navigation overlay */
.nav-panel { position: absolute; left: 0; top: 65px; width: 225px; height: 409px; border-radius: 62px; background: rgba(124,124,124,.94); padding: 52px 8px 0 7px; display: flex; flex-direction: column; gap: 6px; }
.nav-item { height: 36px; background: #f5f5f5; position: relative; display: flex; align-items: center; justify-content: center; font-size: 12.5px; color: #333; padding-top: 5px; }
.nav-item svg { position: absolute; }
.nav-on { background: #222d38; color: #fff; font-weight: 700; font-size: 14px; letter-spacing: -.3px; padding-top: 3px; }
.ni-a { left: 14px; top: 7px; }
.ni-w { left: 13px; top: 5px; }
.ni-e { left: 17px; top: 3px; }
.ni-g { left: 23px; top: 7px; }

.handles { position: absolute; left: 69px; top: 8px; width: 97px; height: 58px; border: 1px solid #a8a8a8; }
.h { position: absolute; border: 0 solid #a8a8a8; }
.h-tl { left: -1px; top: -1px; width: 9px; height: 9px; border-width: 3px 0 0 3px; }
.h-tr { right: -1px; top: -1px; width: 9px; height: 9px; border-width: 3px 3px 0 0; }
.h-bl { left: -1px; bottom: -1px; width: 9px; height: 9px; border-width: 0 0 3px 3px; }
.h-br { right: -1px; bottom: -1px; width: 9px; height: 9px; border-width: 0 3px 3px 0; }
.h-tc { left: 41px; top: -1px; width: 12px; border-top-width: 3px; }
.h-bc { left: 41px; bottom: -1px; width: 12px; border-bottom-width: 3px; }
.h-ml { left: -1px; top: 23px; height: 12px; border-left-width: 3px; }
.h-mr { right: -1px; top: 23px; height: 12px; border-right-width: 3px; }
.more-box { position: absolute; left: 141px; top: 67px; width: 24px; height: 23px; background: #fff; color: #605e5c; text-align: center; font-size: 13px; line-height: 20px; letter-spacing: 1px; }

.vscroll { position: absolute; left: 704px; top: 0; width: 7px; height: 520px; background: #c8c6c4; border-radius: 4px; }
.hscroll { position: absolute; left: 0; top: 538px; width: 508px; height: 8px; background: #c8c6c4; border-radius: 4px; }

.pagetabs { height: 35px; flex: none; display: flex; align-items: stretch; background: #f3f2f1; font-size: 11.5px; }
.pt-nav { width: 40px; display: flex; align-items: center; justify-content: center; gap: 16px; border-right: 1px solid #c8c6c4; }
.pt { display: flex; align-items: center; justify-content: center; gap: 3px; border-right: 1px solid #d2d0ce; color: #323130; letter-spacing: -.15px; }
.pt svg { color: #605e5c; margin-top: 3px; }
.pt-on { width: 92px; background: #fff; border-bottom: 4px solid #117865; padding-top: 3px; }
.pt-w { width: 72px; }
.pt-e { width: 92px; }
.pt-g { width: 60px; }
.pt-add { width: 39px; margin: 2px 0 1px; background: #117865; color: #fff; font-size: 21px; font-weight: 700; line-height: 28px; text-align: center; }

/* side strips and panes */
.strip { flex: none; display: flex; flex-direction: column; align-items: center; padding-top: 13px; border-right: 1px solid #d2d0ce; color: #323130; }
.strip-filters { width: 33px; }
.strip-bookmarks { width: 36px; }
.strip-fn { margin-top: 15px; }
.vtext { writing-mode: vertical-rl; font-weight: 600; font-size: 14.5px; color: #252423; margin-top: 5px; }
.vtext-b { margin-top: 14px; }
.pane { flex: none; position: relative; }
.p-selection { width: 181px; border-right: 1px solid #d2d0ce; }
.p-format { width: 180px; border-right: 1px solid #d2d0ce; }
.p-data { flex: 1; }
.pane-head { height: 45px; display: flex; align-items: center; padding: 0 11px 6px 9px; gap: 8px; flex: none; color: #323130; }
.pane-head h2 { margin: 0 auto 0 0; font-size: 14.5px; font-weight: 600; color: #323130; letter-spacing: -.1px; }
.ic-x { margin-left: 1px; margin-right: -4px; }
.pane-head-f { border-bottom: 1px solid #d2d0ce; padding-left: 8px; padding-right: 9px; }
.sel-tabs { display: flex; padding: 0 0 0 10px; height: 31px; font-size: 11.5px; letter-spacing: -.15px; }
.st { position: relative; height: 31px; line-height: 18px; }
.st-on { width: 72px; padding-left: 5px; margin-right: 29px; color: #201f1e; }
.st-on::after { content: ""; position: absolute; left: 0; right: 0; bottom: 0; height: 3px; border-radius: 2px; background: #117865; }
.sel-tools { display: flex; align-items: center; height: 30px; padding: 0 9px 2px 12px; gap: 12px; border-bottom: 1px solid #e1dfdd; font-size: 11.5px; color: #605e5c; letter-spacing: -.15px; }
.st-show { margin-left: auto; }
.layers { padding: 0 1px 0 3px; }
.layers li { height: 26px; display: flex; align-items: center; padding: 0 7px; font-size: 11.5px; letter-spacing: -.15px; border-radius: 2px; color: #323130; white-space: nowrap; }
.layers li.on { background: #cdcbcb; }
.layers .ln { flex: 1; overflow: hidden; }
.layers svg { color: #605e5c; margin-top: -3px; }
.layers em { font-style: normal; font-size: 12px; width: 12px; margin-left: 5px; margin-top: -3px; color: #605e5c; text-align: center; letter-spacing: .4px; }
.layers .gc { margin: 0 10px 0 -2px; color: #605e5c; }

.f-body { height: 537px; position: relative; overflow: hidden; padding: 0 8px; }
.searchbox { background: #fff; border: 1px solid #605e5c; border-radius: 2px; height: 26px; display: flex; align-items: center; gap: 6px; padding-left: 7px; font-size: 12.5px; color: #605e5c; }
.searchbox span { padding-top: 1px; }
.sb-f { margin-top: 14px; width: 164px; }
.sb-d { margin: 0 4px 0 5px; }
.f-tabs { display: flex; align-items: flex-start; margin-top: 20px; height: 36px; padding-left: 4px; font-size: 12.5px; letter-spacing: -.15px; color: #323130; }
.ft { height: 22px; line-height: 16px; margin-right: 18px; }
.ft-on { border-bottom: 2px solid #117865; font-weight: 600; }
.f-tabs em { margin-left: auto; margin-right: 8px; font-style: normal; font-size: 14px; line-height: 13px; letter-spacing: 1px; }
.f-sec { height: 41px; margin: 0 -8px; padding-left: 11px; border-bottom: 1px solid #e1dfdd; display: flex; align-items: center; gap: 6px; font-size: 11.5px; font-weight: 600; color: #323130; letter-spacing: -.1px; padding-bottom: 2px; }
.f-card { background: #fff; border-radius: 4px; width: 164px; box-shadow: 0 1px 3px rgba(0,0,0,.08); }
.f-cardhead { display: flex; align-items: center; gap: 4px; font-weight: 600; font-size: 11.5px; }
.f-acthead { height: 26px; margin-top: 7px; padding: 0 0 0 2px; width: 164px; }
.f-action { margin-top: 5px; height: 250px; padding: 43px 8px 0; }
.toggle { margin-left: auto; width: 32px; height: 15px; border-radius: 8px; background: #605e5c; color: #fff; font-style: normal; font-size: 8px; line-height: 15px; padding-left: 4px; position: relative; font-weight: 600; }
.toggle::after { content: ""; position: absolute; right: 2px; top: 2px; width: 11px; height: 11px; border-radius: 50%; background: #fff; }
.f-lab { display: block; font-size: 11.5px; line-height: 16px; letter-spacing: -.1px; margin-bottom: 3px; color: #323130; }
.f-dis { color: #a19f9d; }
.f-sel { height: 24px; border: 1px solid #605e5c; border-radius: 2px; display: flex; align-items: center; justify-content: space-between; padding: 0 8px; font-size: 11.5px; margin-bottom: 9px; letter-spacing: -.1px; color: #323130; }
.f-sel-dis { background: #f3f2f1; border-color: #c8c6c4; color: #a19f9d; }
.f-sel-dis svg { color: #a19f9d; }
.f-url { display: flex; gap: 4px; height: 24px; }
.f-url i { flex: 1; background: #f3f2f1; border: 1px solid #c8c6c4; border-radius: 2px; }
.f-url b { width: 24px; background: #f3f2f1; border: 1px solid #c8c6c4; font: italic 14px "Liberation Serif", serif; color: #a19f9d; text-align: center; line-height: 20px; }
.f-tooltip { margin-top: 8px; height: 40px; padding: 0 8px; }
.f-tooltip .f-cardhead { height: 40px; padding-top: 2px; }
.f-scroll { position: absolute; right: 1px; top: 96px; width: 5px; height: 353px; background: #d2d0ce; border-radius: 3px; }

.tree { padding: 10px 0 0 8px; font-size: 11.5px; letter-spacing: -.1px; color: #605e5c; }
.tree li { height: 24px; display: flex; align-items: center; position: relative; white-space: nowrap; }
.tc { margin-right: 3px; color: #8a8886; }
.tc-r { margin-left: 2px; margin-right: 6px; }
.ti { margin-right: 6px; }
.t-f { padding-left: 31px; }
.cb { width: 12px; height: 12px; border: 1px solid #8a8886; border-radius: 2px; background: #f8f8f7; flex: none; }
.fi { position: absolute; left: 49px; }
.tl { position: absolute; left: 69px; color: #605e5c; }
.tx { position: absolute; left: 17px; color: #8a8886; }

.tip { position: absolute; left: 882px; top: 283px; width: 302px; height: 48px; background: #fff; padding: 9px 9px; font-size: 11.5px; line-height: 16px; letter-spacing: -.1px; color: #252423; box-shadow: 0 2px 8px rgba(0,0,0,.2); border-radius: 2px; z-index: 4; }
.tip::after { content: ""; position: absolute; left: 140px; bottom: -9px; border: 10px solid transparent; border-top-color: #fff; border-bottom: 0; }

/* status bar */
.status { height: 23px; flex: none; display: flex; align-items: center; justify-content: space-between; background: #f3f2f1; border-top: 1px solid #d2d0ce; padding: 0 5px; font-size: 11.5px; color: #605e5c; }
.zoom { display: flex; align-items: center; }
.z-btn { width: 9px; text-align: center; font-weight: 600; font-size: 13px; color: #605e5c; }
.z-track { display: block; position: relative; width: 100px; height: 1px; background: #605e5c; margin: 0 5px 0 1px; }
.z-thumb { position: absolute; left: 36px; top: -5px; width: 4px; height: 11px; background: #605e5c; }
.z-tick { position: absolute; left: 50px; top: -2px; width: 1px; height: 5px; background: #605e5c; }
.z-val { margin: 0 19px 0 17px; font-size: 12px; }
.z-upd { margin-left: 18px; font-size: 11.5px; }
.taskbar { height: 2px; flex: none; background: #222; display: flex; padding-left: 48px; }
.tb-gap { width: 344px; background: #c8c6c4; }
```
